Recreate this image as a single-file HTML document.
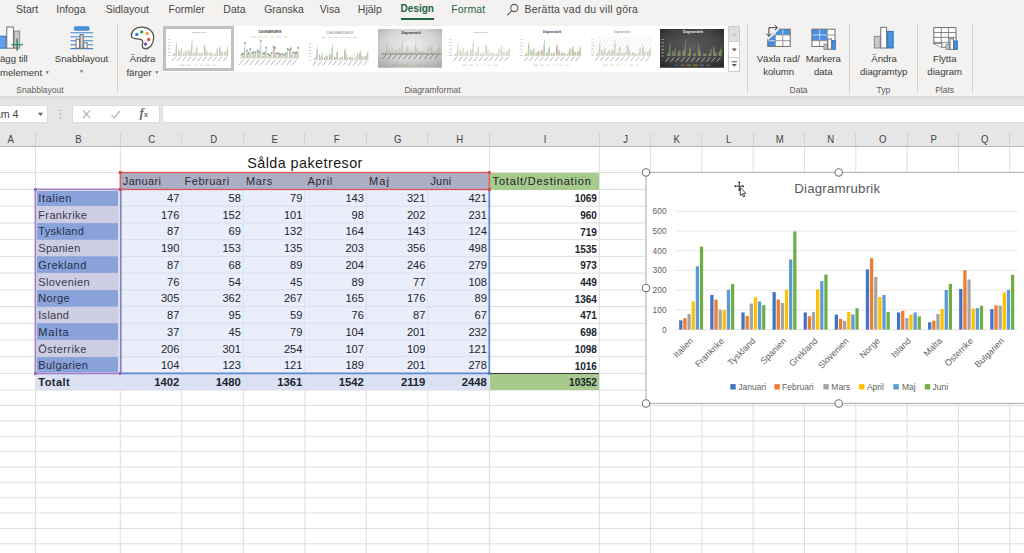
<!DOCTYPE html>
<html lang="sv"><head><meta charset="utf-8"><title>Sålda paketresor</title>
<style>
*{box-sizing:border-box;margin:0;padding:0}
html,body{width:1024px;height:553px;overflow:hidden;background:#fff}
body{font-family:"Liberation Sans",sans-serif;position:relative;color:#222}
.abs{position:absolute}
.t{position:absolute;white-space:nowrap;line-height:1}
#tabs{left:0;top:0;width:1024px;height:20px;background:#f3f2f1}
#tabs span{position:absolute;top:2.5px;font-size:10.5px;color:#484644;white-space:nowrap;line-height:12px}
#ribbon{left:0;top:20px;width:1024px;height:76.2px;background:#f3f2f1}
.rl{position:absolute;font-size:9.6px;color:#3b3a39;white-space:nowrap;line-height:12px;text-align:center;transform:translateX(-50%)}
.gl{position:absolute;font-size:8.5px;color:#605e5c;white-space:nowrap;line-height:10px;text-align:center;transform:translateX(-50%);top:85px}
.sep{position:absolute;top:24px;width:1px;height:69px;background:#d2d0ce}
#fbar{left:0;top:96.2px;width:1024px;height:50.8px;background:#e6e6e6}
.box{position:absolute;top:104.6px;height:18.7px;background:#fff;border:1px solid #dcdcdc}
.ch{position:absolute;top:132.3px;margin-left:.8px;height:15px;font-size:11.4px;color:#444;text-align:center;line-height:15px;transform:scaleX(.84)}
.chs{position:absolute;top:132.5px;width:1px;height:14px;background:#d3d3d3}
.cell{position:absolute;font-size:11px;white-space:nowrap;color:#20242e;overflow:visible}
.num{text-align:right;padding-right:2.4px;font-size:11.1px}
.txt{padding-left:2.6px}
.b{font-weight:bold}
.sm{font-size:10px}
</style></head><body>

<div id="tabs" class="abs">
<span style="left:16.1px">Start</span>
<span style="left:56.3px">Infoga</span>
<span style="left:105.7px">Sidlayout</span>
<span style="left:168.6px">Formler</span>
<span style="left:223.3px">Data</span>
<span style="left:264.2px">Granska</span>
<span style="left:319.8px">Visa</span>
<span style="left:357.8px">Hjälp</span>
<span style="left:400.6px;color:#1e6444;font-weight:bold;font-size:10px">Design</span>
<span style="left:451.2px;color:#21684a;letter-spacing:.15px">Format</span>
<div class="abs" style="left:400.6px;top:17.7px;width:33.6px;height:2.3px;background:#1e6444"></div>
<svg class="abs" style="left:505px;top:2px" width="16" height="16" viewBox="0 0 16 16"><circle cx="9.3" cy="6" r="3.6" fill="none" stroke="#605e5c" stroke-width="1.1"/><path d="M6.7 8.7L2.6 12.9" stroke="#605e5c" stroke-width="1.2" stroke-linecap="round"/></svg>
<span style="left:524.5px;letter-spacing:.26px">Berätta vad du vill göra</span>
</div>
<div id="ribbon" class="abs"></div>
<div class="rl" style="left:0;top:53px;transform:none;text-align:left">ägg till</div>
<div class="rl" style="left:0;top:65.5px;transform:none;text-align:left">melement <span style="font-size:5px;vertical-align:2.2px;color:#6a6a6a">&#9660;</span></div>
<div class="rl" style="left:81.5px;top:53px">Snabblayout</div>
<div class="rl" style="left:81.5px;top:65px"><span style="font-size:5px;vertical-align:2.2px;color:#6a6a6a">&#9660;</span></div>
<div class="gl" style="left:40px">Snabblayout</div>
<div class="sep" style="left:117px"></div>
<div class="rl" style="left:142.6px;top:53px">Ändra</div>
<div class="rl" style="left:142.8px;top:65.5px">färger <span style="font-size:5px;vertical-align:2.2px;color:#6a6a6a">&#9660;</span></div>
<div class="gl" style="left:432.5px">Diagramformat</div>
<div class="sep" style="left:747px"></div>
<div class="rl" style="left:778.3px;top:53px">Växla rad/</div>
<div class="rl" style="left:778.6px;top:65.5px">kolumn</div>
<div class="rl" style="left:823.3px;top:53px">Markera</div>
<div class="rl" style="left:823.3px;top:65.5px">data</div>
<div class="gl" style="left:798.6px">Data</div>
<div class="sep" style="left:849px"></div>
<div class="rl" style="left:884.1px;top:53px">Ändra</div>
<div class="rl" style="left:883.7px;top:65.5px">diagramtyp</div>
<div class="gl" style="left:883.3px">Typ</div>
<div class="sep" style="left:917px"></div>
<div class="rl" style="left:944.8px;top:53px">Flytta</div>
<div class="rl" style="left:944.7px;top:65.5px">diagram</div>
<div class="gl" style="left:944.6px">Plats</div>
<div class="sep" style="left:971.5px"></div>
<svg class="abs" style="left:0;top:0" width="1024" height="96" viewBox="0 0 1024 96"><rect x="-2.50" y="36.20" width="8.50" height="12.00" fill="#62a0e8" stroke="#2f74c6" stroke-width="1"/><rect x="14.10" y="31.00" width="5.50" height="17.20" fill="#c9c9c9" stroke="#8a8a8a" stroke-width="1"/><rect x="6.80" y="27.00" width="6.60" height="21.20" fill="#fff" stroke="#6e6e6e" stroke-width="1"/><path d="M17.1 38.6v12.2" stroke="#1e7a45" stroke-width="1.3"/><path d="M11.2 44.7h11.8" stroke="#2a8f86" stroke-width="1.3"/><rect x="74.4" y="26.7" width="14.6" height="3.6" rx=".8" fill="#4a90e2" stroke="#2f74c6" stroke-width=".7"/><path d="M70.5 32.8h22.6M70.5 36.7h22.6M70.5 40.7h22.6M70.5 44.7h22.6M70.5 48.6h22.6" stroke="#3f84d8" stroke-width="1.1"/><rect x="76.10" y="39.20" width="3.30" height="9.10" fill="#fff" stroke="#6e6e6e" stroke-width="1"/><rect x="83.80" y="42.70" width="3.30" height="5.60" fill="#fff" stroke="#6e6e6e" stroke-width="1"/><rect x="80.00" y="34.60" width="3.20" height="13.70" fill="#d2d2d2" stroke="#6e6e6e" stroke-width="1"/><path d="M141.7 27.2C148.2 27.2 153.7 31.2 153.7 37.6C153.7 44 149.6 48.8 145.6 48.8C142.5 48.8 141.7 46.5 142.5 44C143.3 41.5 142.6 39.7 139.6 39.2C136 38.6 131.3 39.6 131.3 35.6C131.3 30.6 136 27.2 141.7 27.2Z" fill="#fff" stroke="#505050" stroke-width="1.25"/><circle cx="136.8" cy="34.4" r="1.65" fill="#2f7be0"/><circle cx="141.7" cy="31.9" r="1.65" fill="#2c9a48"/><circle cx="147.1" cy="33.6" r="1.65" fill="#f39a2b"/><circle cx="148.7" cy="39.5" r="1.65" fill="#e24a2d"/><circle cx="145.5" cy="44.1" r="1.65" fill="#7c3fb5"/><rect x="767.8" y="29.2" width="22.4" height="17.2" fill="#fff"/><rect x="767.8" y="29.2" width="22.4" height="5.7" fill="#4a90e2"/><rect x="767.8" y="29.2" width="7.5" height="17.2" fill="#4a90e2"/><path d="M775.3 29.2V34.9M782.8 29.2V34.9M767.8 34.9H775.3M767.8 40.7H775.3" stroke="#cfe2f8" stroke-width=".9"/><path d="M775.3 34.9V46.4M782.8 34.9V46.4M775.3 34.9H790.2M775.3 40.7H790.2" stroke="#8c8c8c" stroke-width=".9"/><rect x="767.8" y="29.2" width="22.4" height="17.2" fill="none" stroke="#6e6e6e" stroke-width="1"/><path d="M766.5999999999999 28.0H778.9L766.5999999999999 39.699999999999996Z" fill="#f3f2f1"/><path d="M778.6999999999999 29.2L767.8 39.5" stroke="#fff" stroke-width="1.1"/><path d="M768.9 36.2V27.7H777" fill="none" stroke="#3d3d3d" stroke-width="1"/><path d="M774.6 25l2.8 2.7-2.8 2.7M766.3 33.6l2.6 2.8 2.6-2.8" fill="none" stroke="#3d3d3d" stroke-width="1"/><rect x="811.9" y="29.2" width="23.1" height="17.2" fill="#fff"/><rect x="811.9" y="29.2" width="15.4" height="11.5" fill="#4a90e2"/><path d="M819.6 29.2V40.7M811.9 34.9H827.3" stroke="#cfe2f8" stroke-width=".9"/><path d="M819.6 40.7V46.4M827.3 29.2V46.4M827.3 34.9H835.0M811.9 40.7H835.0" stroke="#8c8c8c" stroke-width=".9"/><rect x="811.9" y="29.2" width="23.1" height="17.2" fill="none" stroke="#6e6e6e" stroke-width="1"/><path d="M822.6 37.4H827.3M822.6 37.4V46.4" stroke="#6e6e6e" stroke-width="0"/><rect x="824.00" y="44.10" width="3.20" height="5.20" fill="#c9c9c9" stroke="#8a8a8a" stroke-width="1"/><rect x="832.10" y="40.60" width="3.20" height="8.70" fill="#4a90e2" stroke="#2f74c6" stroke-width="1"/><rect x="827.90" y="38.90" width="3.50" height="10.40" fill="#fff" stroke="#6e6e6e" stroke-width="1"/><rect x="874.30" y="36.30" width="5.90" height="11.70" fill="#c9c9c9" stroke="#8a8a8a" stroke-width="1"/><rect x="887.20" y="31.40" width="6.00" height="16.60" fill="#4a90e2" stroke="#2f74c6" stroke-width="1"/><rect x="880.80" y="27.30" width="5.80" height="20.70" fill="#fff" stroke="#6e6e6e" stroke-width="1"/><path d="M933.8 27.6H956.0V47.2H941.4L933.8 43.6Z" fill="#fff" stroke="#6e6e6e" stroke-width="1"/><path d="M941.2 27.6V47.2M948.6 27.6V47.2M933.8 32.5H956.0M933.8 37.4H956.0M933.8 42.3H956.0" stroke="#7c7c7c" stroke-width=".9"/><path d="M933.8 43.6H942.4L941.4 47.2" fill="#fff" stroke="#6e6e6e" stroke-width=".9"/><rect x="946.00" y="44.30" width="3.40" height="5.10" fill="#c9c9c9" stroke="#8a8a8a" stroke-width="1"/><rect x="954.10" y="41.00" width="3.30" height="8.40" fill="#4a90e2" stroke="#2f74c6" stroke-width="1"/><rect x="950.00" y="38.70" width="3.50" height="10.70" fill="#fff" stroke="#6e6e6e" stroke-width="1"/></svg>
<div class="abs" style="left:162.7px;top:25.5px;width:565.5px;height:46.8px;background:#fff"></div>
<div class="abs" style="left:162.9px;top:26.4px;width:70.8px;height:44.6px;border:3.1px solid #c1c1c1;background:#fff"></div>
<div class="abs" style="left:728.2px;top:25.5px;width:11.7px;height:46.8px;background:#fff;border:1px solid #cfcdcb"></div>
<div class="abs" style="left:728.2px;top:25.5px;width:11.7px;height:16.4px;background:#e0dedc;border:1px solid #cfcdcb"></div>
<div class="abs" style="left:728.2px;top:57.2px;width:11.7px;height:1px;background:#cfcdcb"></div>
<svg class="abs" style="left:727.7px;top:25.6px" width="13" height="48" viewBox="0 0 13 48">
<path d="M4.2 9.6L6.3 7.4 8.4 9.6z" fill="#bdbdbd"/>
<path d="M3.8 22.5h5L6.3 25.3z" fill="#555"/>
<path d="M3.6 35.8h5.4" stroke="#555" stroke-width="1"/><path d="M3.8 38h5L6.3 40.8z" fill="#555"/>
</svg>
<svg class="abs" style="left:166.0px;top:29.0px" width="64.6" height="38.8" viewBox="0 0 64.6 38.8"><text x="33.1" y="4.36" font-size="2.39" text-anchor="middle" fill="#8f8f8f" font-family="Liberation Sans, sans-serif">Diagramrubrik</text><path d="M7.11 26.40v-1.51h0.62v1.51zM12.23 26.40v-5.67h0.62v5.67zM17.35 26.40v-2.80h0.62v2.80zM22.47 26.40v-6.12h0.62v6.12zM27.59 26.40v-2.80h0.62v2.80zM32.71 26.40v-2.45h0.62v2.45zM37.82 26.40v-9.82h0.62v9.82zM42.94 26.40v-2.80h0.62v2.80zM48.06 26.40v-1.19h0.62v1.19zM53.18 26.40v-6.63h0.62v6.63zM58.30 26.40v-3.35h0.62v3.35z" fill="#4472c4" opacity="0.55"/><path d="M7.77 26.40v-1.87h0.62v1.87zM12.89 26.40v-4.89h0.62v4.89zM18.01 26.40v-2.22h0.62v2.22zM23.12 26.40v-4.93h0.62v4.93zM28.24 26.40v-2.19h0.62v2.19zM33.36 26.40v-1.74h0.62v1.74zM38.48 26.40v-11.66h0.62v11.66zM43.60 26.40v-3.06h0.62v3.06zM48.72 26.40v-1.45h0.62v1.45zM53.83 26.40v-9.69h0.62v9.69zM58.95 26.40v-3.96h0.62v3.96z" fill="#ed7d31" opacity="0.55"/><path d="M8.42 26.40v-2.54h0.62v2.54zM13.54 26.40v-3.25h0.62v3.25zM18.66 26.40v-4.25h0.62v4.25zM23.78 26.40v-4.35h0.62v4.35zM28.90 26.40v-2.87h0.62v2.87zM34.02 26.40v-1.45h0.62v1.45zM39.13 26.40v-8.60h0.62v8.60zM44.25 26.40v-1.90h0.62v1.90zM49.37 26.40v-2.54h0.62v2.54zM54.49 26.40v-8.18h0.62v8.18zM59.61 26.40v-3.90h0.62v3.90z" fill="#a5a5a5" opacity="0.55"/><path d="M9.08 26.40v-4.60h0.62v4.60zM14.20 26.40v-3.16h0.62v3.16zM19.32 26.40v-5.28h0.62v5.28zM24.43 26.40v-6.54h0.62v6.54zM29.55 26.40v-6.57h0.62v6.57zM34.67 26.40v-2.87h0.62v2.87zM39.79 26.40v-5.31h0.62v5.31zM44.91 26.40v-2.45h0.62v2.45zM50.03 26.40v-3.35h0.62v3.35zM55.14 26.40v-3.45h0.62v3.45zM60.26 26.40v-6.09h0.62v6.09z" fill="#ffc000" opacity="0.55"/><path d="M9.74 26.40v-10.34h0.62v10.34zM14.85 26.40v-6.50h0.62v6.50zM19.97 26.40v-4.60h0.62v4.60zM25.09 26.40v-11.46h0.62v11.46zM30.21 26.40v-7.92h0.62v7.92zM35.33 26.40v-2.48h0.62v2.48zM40.44 26.40v-5.67h0.62v5.67zM45.56 26.40v-2.80h0.62v2.80zM50.68 26.40v-6.47h0.62v6.47zM55.80 26.40v-3.51h0.62v3.51zM60.92 26.40v-6.47h0.62v6.47z" fill="#5b9bd5" opacity="0.55"/><path d="M10.39 26.40v-13.56h0.62v13.56zM15.51 26.40v-7.44h0.62v7.44zM20.63 26.40v-3.99h0.62v3.99zM25.75 26.40v-16.04h0.62v16.04zM30.86 26.40v-8.98h0.62v8.98zM35.98 26.40v-3.48h0.62v3.48zM41.10 26.40v-2.87h0.62v2.87zM46.22 26.40v-2.16h0.62v2.16zM51.34 26.40v-7.47h0.62v7.47zM56.45 26.40v-3.90h0.62v3.90zM61.57 26.40v-8.95h0.62v8.95z" fill="#70ad47" opacity="0.55"/><path d="M6.0 26.6H63.3" stroke="#cfcfcf" stroke-width=".5"/><path d="M1.9 26.0h2.6v.9h-2.6zM1.9 22.8h2.6v.9h-2.6zM1.9 19.6h2.6v.9h-2.6zM1.9 16.3h2.6v.9h-2.6zM1.9 13.1h2.6v.9h-2.6zM1.9 9.9h2.6v.9h-2.6z" fill="#9c9c9c" opacity=".5"/><path d="M9.7 27.8l-3.7 4.3M14.8 27.8l-3.7 4.3M19.9 27.8l-3.7 4.3M25.0 27.8l-3.7 4.3M30.1 27.8l-3.7 4.3M35.3 27.8l-3.7 4.3M40.4 27.8l-3.7 4.3M45.5 27.8l-3.7 4.3M50.6 27.8l-3.7 4.3M55.7 27.8l-3.7 4.3M60.9 27.8l-3.7 4.3" stroke="#8e8e8e" stroke-width=".9" opacity=".75" fill="none"/><rect x="14.3" y="35.7" width="4.4" height=".8" fill="#4472c4" opacity="0.42"/><rect x="20.6" y="35.7" width="4.4" height=".8" fill="#ed7d31" opacity="0.42"/><rect x="26.9" y="35.7" width="4.4" height=".8" fill="#a5a5a5" opacity="0.42"/><rect x="33.2" y="35.7" width="4.4" height=".8" fill="#ffc000" opacity="0.42"/><rect x="39.5" y="35.7" width="4.4" height=".8" fill="#5b9bd5" opacity="0.42"/><rect x="45.8" y="35.7" width="4.4" height=".8" fill="#70ad47" opacity="0.42"/></svg>
<svg class="abs" style="left:236.5px;top:29.0px" width="64.6" height="38.8" viewBox="0 0 64.6 38.8"><text x="33.1" y="4.26" font-size="2.67" text-anchor="middle" fill="#3c3c3c" font-weight="bold" font-family="Liberation Sans, sans-serif">DIAGRAMRUBRIK</text><path d="M4.14 28.90v-1.46h0.65v1.46zM9.47 28.90v-5.46h0.65v5.46zM14.79 28.90v-2.70h0.65v2.70zM20.12 28.90v-5.89h0.65v5.89zM25.45 28.90v-2.70h0.65v2.70zM30.78 28.90v-2.36h0.65v2.36zM36.10 28.90v-9.46h0.65v9.46zM41.43 28.90v-2.70h0.65v2.70zM46.76 28.90v-1.15h0.65v1.15zM52.08 28.90v-6.39h0.65v6.39zM57.41 28.90v-3.22h0.65v3.22z" fill="#4472c4" opacity="0.62"/><path d="M4.82 28.90v-1.80h0.65v1.80zM10.15 28.90v-4.71h0.65v4.71zM15.48 28.90v-2.14h0.65v2.14zM20.80 28.90v-4.74h0.65v4.74zM26.13 28.90v-2.11h0.65v2.11zM31.46 28.90v-1.67h0.65v1.67zM36.79 28.90v-11.22h0.65v11.22zM42.11 28.90v-2.94h0.65v2.94zM47.44 28.90v-1.40h0.65v1.40zM52.77 28.90v-9.33h0.65v9.33zM58.09 28.90v-3.81h0.65v3.81z" fill="#ed7d31" opacity="0.62"/><path d="M5.50 28.90v-2.45h0.65v2.45zM10.83 28.90v-3.13h0.65v3.13zM16.16 28.90v-4.09h0.65v4.09zM21.49 28.90v-4.19h0.65v4.19zM26.81 28.90v-2.76h0.65v2.76zM32.14 28.90v-1.40h0.65v1.40zM37.47 28.90v-8.28h0.65v8.28zM42.79 28.90v-1.83h0.65v1.83zM48.12 28.90v-2.45h0.65v2.45zM53.45 28.90v-7.87h0.65v7.87zM58.78 28.90v-3.75h0.65v3.75z" fill="#a5a5a5" opacity="0.62"/><path d="M6.19 28.90v-4.43h0.65v4.43zM11.51 28.90v-3.04h0.65v3.04zM16.84 28.90v-5.08h0.65v5.08zM22.17 28.90v-6.29h0.65v6.29zM27.49 28.90v-6.32h0.65v6.32zM32.82 28.90v-2.76h0.65v2.76zM38.15 28.90v-5.12h0.65v5.12zM43.48 28.90v-2.36h0.65v2.36zM48.80 28.90v-3.22h0.65v3.22zM54.13 28.90v-3.32h0.65v3.32zM59.46 28.90v-5.86h0.65v5.86z" fill="#ffc000" opacity="0.62"/><path d="M6.87 28.90v-9.95h0.65v9.95zM12.20 28.90v-6.26h0.65v6.26zM17.52 28.90v-4.43h0.65v4.43zM22.85 28.90v-11.04h0.65v11.04zM28.18 28.90v-7.63h0.65v7.63zM33.50 28.90v-2.39h0.65v2.39zM38.83 28.90v-5.46h0.65v5.46zM44.16 28.90v-2.70h0.65v2.70zM49.49 28.90v-6.23h0.65v6.23zM54.81 28.90v-3.38h0.65v3.38zM60.14 28.90v-6.23h0.65v6.23z" fill="#5b9bd5" opacity="0.62"/><path d="M7.55 28.90v-13.05h0.65v13.05zM12.88 28.90v-7.16h0.65v7.16zM18.20 28.90v-3.84h0.65v3.84zM23.53 28.90v-15.44h0.65v15.44zM28.86 28.90v-8.65h0.65v8.65zM34.19 28.90v-3.35h0.65v3.35zM39.51 28.90v-2.76h0.65v2.76zM44.84 28.90v-2.08h0.65v2.08zM50.17 28.90v-7.19h0.65v7.19zM55.50 28.90v-3.75h0.65v3.75zM60.82 28.90v-8.62h0.65v8.62z" fill="#70ad47" opacity="0.62"/><path d="M3.84 24.84h1.5v2h-1.5zM5.20 23.85h1.5v2h-1.5zM7.25 13.25h1.5v2h-1.5zM9.17 20.84h1.5v2h-1.5zM10.53 23.17h1.5v2h-1.5zM12.58 19.14h1.5v2h-1.5zM14.49 23.60h1.5v2h-1.5zM15.86 22.21h1.5v2h-1.5zM17.90 22.46h1.5v2h-1.5zM19.82 20.41h1.5v2h-1.5zM21.19 22.11h1.5v2h-1.5zM23.23 10.86h1.5v2h-1.5zM25.15 23.60h1.5v2h-1.5zM26.51 23.54h1.5v2h-1.5zM28.56 17.65h1.5v2h-1.5zM30.48 23.94h1.5v2h-1.5zM31.84 24.90h1.5v2h-1.5zM33.89 22.95h1.5v2h-1.5zM35.80 16.84h1.5v2h-1.5zM37.17 18.02h1.5v2h-1.5zM39.21 23.54h1.5v2h-1.5zM41.13 23.60h1.5v2h-1.5zM42.49 24.47h1.5v2h-1.5zM44.54 24.22h1.5v2h-1.5zM46.46 25.15h1.5v2h-1.5zM47.82 23.85h1.5v2h-1.5zM49.87 19.11h1.5v2h-1.5zM51.78 19.91h1.5v2h-1.5zM53.15 18.43h1.5v2h-1.5zM55.20 22.55h1.5v2h-1.5zM57.11 23.08h1.5v2h-1.5zM58.48 22.55h1.5v2h-1.5zM60.52 17.68h1.5v2h-1.5z" fill="#555" opacity=".6"/><path d="M3.0 29.1H62.6" stroke="#cfcfcf" stroke-width=".5"/><path d="M6.8 30.3l-5.0 5.8M12.1 30.3l-5.0 5.8M17.5 30.3l-5.0 5.8M22.8 30.3l-5.0 5.8M28.1 30.3l-5.0 5.8M33.4 30.3l-5.0 5.8M38.8 30.3l-5.0 5.8M44.1 30.3l-5.0 5.8M49.4 30.3l-5.0 5.8M54.7 30.3l-5.0 5.8M60.1 30.3l-5.0 5.8" stroke="#8e8e8e" stroke-width=".9" opacity=".75" fill="none"/><rect x="14.3" y="7.5" width="4.4" height=".8" fill="#4472c4" opacity="0.42"/><rect x="20.6" y="7.5" width="4.4" height=".8" fill="#ed7d31" opacity="0.42"/><rect x="26.9" y="7.5" width="4.4" height=".8" fill="#a5a5a5" opacity="0.42"/><rect x="33.2" y="7.5" width="4.4" height=".8" fill="#ffc000" opacity="0.42"/><rect x="39.5" y="7.5" width="4.4" height=".8" fill="#5b9bd5" opacity="0.42"/><rect x="45.8" y="7.5" width="4.4" height=".8" fill="#70ad47" opacity="0.42"/></svg>
<svg class="abs" style="left:307.0px;top:29.0px" width="64.6" height="38.8" viewBox="0 0 64.6 38.8"><text x="33.1" y="5.15" font-size="3.20" text-anchor="middle" fill="#8a8a8a" font-family="Liberation Sans, sans-serif">DIAGRAMRUBRIK</text><path d="M6.91 30.80v-1.49h0.62v1.49zM11.95 30.80v-5.56h0.62v5.56zM17.00 30.80v-2.75h0.62v2.75zM22.04 30.80v-6.00h0.62v6.00zM27.09 30.80v-2.75h0.62v2.75zM32.13 30.80v-2.40h0.62v2.40zM37.18 30.80v-9.64h0.62v9.64zM42.22 30.80v-2.75h0.62v2.75zM47.27 30.80v-1.17h0.62v1.17zM52.31 30.80v-6.51h0.62v6.51zM57.36 30.80v-3.29h0.62v3.29z" fill="#4472c4" opacity="0.65"/><path d="M7.55 30.80v-1.83h0.62v1.83zM12.60 30.80v-4.80h0.62v4.80zM17.64 30.80v-2.18h0.62v2.18zM22.69 30.80v-4.83h0.62v4.83zM27.73 30.80v-2.15h0.62v2.15zM32.78 30.80v-1.71h0.62v1.71zM37.82 30.80v-11.44h0.62v11.44zM42.87 30.80v-3.00h0.62v3.00zM47.92 30.80v-1.42h0.62v1.42zM52.96 30.80v-9.51h0.62v9.51zM58.01 30.80v-3.89h0.62v3.89z" fill="#ed7d31" opacity="0.65"/><path d="M8.20 30.80v-2.50h0.62v2.50zM13.24 30.80v-3.19h0.62v3.19zM18.29 30.80v-4.17h0.62v4.17zM23.33 30.80v-4.27h0.62v4.27zM28.38 30.80v-2.81h0.62v2.81zM33.42 30.80v-1.42h0.62v1.42zM38.47 30.80v-8.44h0.62v8.44zM43.52 30.80v-1.86h0.62v1.86zM48.56 30.80v-2.50h0.62v2.50zM53.61 30.80v-8.03h0.62v8.03zM58.65 30.80v-3.82h0.62v3.82z" fill="#a5a5a5" opacity="0.65"/><path d="M8.84 30.80v-4.52h0.62v4.52zM13.89 30.80v-3.10h0.62v3.10zM18.93 30.80v-5.18h0.62v5.18zM23.98 30.80v-6.41h0.62v6.41zM29.03 30.80v-6.45h0.62v6.45zM34.07 30.80v-2.81h0.62v2.81zM39.12 30.80v-5.21h0.62v5.21zM44.16 30.80v-2.40h0.62v2.40zM49.21 30.80v-3.29h0.62v3.29zM54.25 30.80v-3.38h0.62v3.38zM59.30 30.80v-5.97h0.62v5.97z" fill="#ffc000" opacity="0.65"/><path d="M9.49 30.80v-10.14h0.62v10.14zM14.54 30.80v-6.38h0.62v6.38zM19.58 30.80v-4.52h0.62v4.52zM24.63 30.80v-11.25h0.62v11.25zM29.67 30.80v-7.77h0.62v7.77zM34.72 30.80v-2.43h0.62v2.43zM39.76 30.80v-5.56h0.62v5.56zM44.81 30.80v-2.75h0.62v2.75zM49.85 30.80v-6.35h0.62v6.35zM54.90 30.80v-3.44h0.62v3.44zM59.94 30.80v-6.35h0.62v6.35z" fill="#5b9bd5" opacity="0.65"/><path d="M10.14 30.80v-13.30h0.62v13.30zM15.18 30.80v-7.30h0.62v7.30zM20.23 30.80v-3.92h0.62v3.92zM25.27 30.80v-15.74h0.62v15.74zM30.32 30.80v-8.82h0.62v8.82zM35.36 30.80v-3.41h0.62v3.41zM40.41 30.80v-2.81h0.62v2.81zM45.45 30.80v-2.12h0.62v2.12zM50.50 30.80v-7.33h0.62v7.33zM55.54 30.80v-3.82h0.62v3.82zM60.59 30.80v-8.78h0.62v8.78z" fill="#70ad47" opacity="0.65"/><path d="M5.8 31.0H62.3" stroke="#cfcfcf" stroke-width=".5"/><path d="M1.7 30.4h2.6v.9h-2.6zM1.7 27.2h2.6v.9h-2.6zM1.7 24.1h2.6v.9h-2.6zM1.7 20.9h2.6v.9h-2.6zM1.7 17.8h2.6v.9h-2.6zM1.7 14.6h2.6v.9h-2.6z" fill="#9c9c9c" opacity=".5"/><path d="M9.4 32.2l-3.7 4.3M14.5 32.2l-3.7 4.3M19.5 32.2l-3.7 4.3M24.6 32.2l-3.7 4.3M29.6 32.2l-3.7 4.3M34.7 32.2l-3.7 4.3M39.7 32.2l-3.7 4.3M44.7 32.2l-3.7 4.3M49.8 32.2l-3.7 4.3M54.8 32.2l-3.7 4.3M59.9 32.2l-3.7 4.3" stroke="#8e8e8e" stroke-width=".9" opacity=".75" fill="none"/><rect x="14.3" y="8.2" width="4.4" height=".8" fill="#4472c4" opacity="0.42"/><rect x="20.6" y="8.2" width="4.4" height=".8" fill="#ed7d31" opacity="0.42"/><rect x="26.9" y="8.2" width="4.4" height=".8" fill="#a5a5a5" opacity="0.42"/><rect x="33.2" y="8.2" width="4.4" height=".8" fill="#ffc000" opacity="0.42"/><rect x="39.5" y="8.2" width="4.4" height=".8" fill="#5b9bd5" opacity="0.42"/><rect x="45.8" y="8.2" width="4.4" height=".8" fill="#70ad47" opacity="0.42"/></svg>
<svg class="abs" style="left:377.5px;top:29.0px" width="64.6" height="38.8" viewBox="0 0 64.6 38.8"><defs><radialGradient id="gg" cx="50%" cy="40%" r="70%"><stop offset="0" stop-color="#ededed"/><stop offset=".55" stop-color="#d6d6d6"/><stop offset="1" stop-color="#adadad"/></radialGradient></defs><rect width="64.6" height="38.8" fill="url(#gg)"/><text x="33.1" y="5.02" font-size="2.84" text-anchor="middle" fill="#2e2e2e" font-weight="bold" font-family="Liberation Sans, sans-serif">Diagramrubrik</text><rect x="3.8" y="24.2" width="59.5" height="1.7" fill="#8f8f8f" opacity=".75"/><path d="M5.43 24.50v-1.32h0.64v1.32zM10.65 24.50v-4.93h0.64v4.93zM15.88 24.50v-2.44h0.64v2.44zM21.11 24.50v-5.32h0.64v5.32zM26.34 24.50v-2.44h0.64v2.44zM31.56 24.50v-2.13h0.64v2.13zM36.79 24.50v-8.54h0.64v8.54zM42.02 24.50v-2.44h0.64v2.44zM47.25 24.50v-1.04h0.64v1.04zM52.47 24.50v-5.77h0.64v5.77zM57.70 24.50v-2.91h0.64v2.91z" fill="#4472c4" opacity="0.35"/><path d="M6.10 24.50v-1.62h0.64v1.62zM11.32 24.50v-4.26h0.64v4.26zM16.55 24.50v-1.93h0.64v1.93zM21.78 24.50v-4.28h0.64v4.28zM27.01 24.50v-1.90h0.64v1.90zM32.23 24.50v-1.51h0.64v1.51zM37.46 24.50v-10.14h0.64v10.14zM42.69 24.50v-2.66h0.64v2.66zM47.91 24.50v-1.26h0.64v1.26zM53.14 24.50v-8.43h0.64v8.43zM58.37 24.50v-3.44h0.64v3.44z" fill="#ed7d31" opacity="0.35"/><path d="M6.77 24.50v-2.21h0.64v2.21zM11.99 24.50v-2.83h0.64v2.83zM17.22 24.50v-3.70h0.64v3.70zM22.45 24.50v-3.78h0.64v3.78zM27.68 24.50v-2.49h0.64v2.49zM32.90 24.50v-1.26h0.64v1.26zM38.13 24.50v-7.48h0.64v7.48zM43.36 24.50v-1.65h0.64v1.65zM48.58 24.50v-2.21h0.64v2.21zM53.81 24.50v-7.11h0.64v7.11zM59.04 24.50v-3.39h0.64v3.39z" fill="#a5a5a5" opacity="0.35"/><path d="M7.44 24.50v-4.00h0.64v4.00zM12.66 24.50v-2.74h0.64v2.74zM17.89 24.50v-4.59h0.64v4.59zM23.12 24.50v-5.68h0.64v5.68zM28.34 24.50v-5.71h0.64v5.71zM33.57 24.50v-2.49h0.64v2.49zM38.80 24.50v-4.62h0.64v4.62zM44.03 24.50v-2.13h0.64v2.13zM49.25 24.50v-2.91h0.64v2.91zM54.48 24.50v-3.00h0.64v3.00zM59.71 24.50v-5.29h0.64v5.29z" fill="#ffc000" opacity="0.35"/><path d="M8.10 24.50v-8.99h0.64v8.99zM13.33 24.50v-5.66h0.64v5.66zM18.56 24.50v-4.00h0.64v4.00zM23.79 24.50v-9.97h0.64v9.97zM29.01 24.50v-6.89h0.64v6.89zM34.24 24.50v-2.16h0.64v2.16zM39.47 24.50v-4.93h0.64v4.93zM44.70 24.50v-2.44h0.64v2.44zM49.92 24.50v-5.63h0.64v5.63zM55.15 24.50v-3.05h0.64v3.05zM60.38 24.50v-5.63h0.64v5.63z" fill="#5b9bd5" opacity="0.35"/><path d="M8.77 24.50v-11.79h0.64v11.79zM14.00 24.50v-6.47h0.64v6.47zM19.23 24.50v-3.47h0.64v3.47zM24.46 24.50v-13.94h0.64v13.94zM29.68 24.50v-7.81h0.64v7.81zM34.91 24.50v-3.02h0.64v3.02zM40.14 24.50v-2.49h0.64v2.49zM45.36 24.50v-1.88h0.64v1.88zM50.59 24.50v-6.50h0.64v6.50zM55.82 24.50v-3.39h0.64v3.39zM61.05 24.50v-7.78h0.64v7.78z" fill="#70ad47" opacity="0.35"/><path d="M8.0 25.9l-3.7 4.3M13.3 25.9l-3.7 4.3M18.5 25.9l-3.7 4.3M23.7 25.9l-3.7 4.3M29.0 25.9l-3.7 4.3M34.2 25.9l-3.7 4.3M39.4 25.9l-3.7 4.3M44.6 25.9l-3.7 4.3M49.9 25.9l-3.7 4.3M55.1 25.9l-3.7 4.3M60.3 25.9l-3.7 4.3" stroke="#5e5e5e" stroke-width=".9" opacity=".75" fill="none"/><rect x="14.3" y="35.7" width="4.4" height=".8" fill="#4472c4" opacity="0.42"/><rect x="20.6" y="35.7" width="4.4" height=".8" fill="#ed7d31" opacity="0.42"/><rect x="26.9" y="35.7" width="4.4" height=".8" fill="#a5a5a5" opacity="0.42"/><rect x="33.2" y="35.7" width="4.4" height=".8" fill="#ffc000" opacity="0.42"/><rect x="39.5" y="35.7" width="4.4" height=".8" fill="#5b9bd5" opacity="0.42"/><rect x="45.8" y="35.7" width="4.4" height=".8" fill="#70ad47" opacity="0.42"/></svg>
<svg class="abs" style="left:448.0px;top:29.0px" width="64.6" height="38.8" viewBox="0 0 64.6 38.8"><text x="33.1" y="4.36" font-size="2.39" text-anchor="middle" fill="#8f8f8f" font-family="Liberation Sans, sans-serif">Diagramrubrik</text><path d="M6.52 26.40v-1.51h0.63v1.51zM11.64 26.40v-5.67h0.63v5.67zM16.77 26.40v-2.80h0.63v2.80zM21.90 26.40v-6.12h0.63v6.12zM27.02 26.40v-2.80h0.63v2.80zM32.15 26.40v-2.45h0.63v2.45zM37.28 26.40v-9.82h0.63v9.82zM42.41 26.40v-2.80h0.63v2.80zM47.53 26.40v-1.19h0.63v1.19zM52.66 26.40v-6.63h0.63v6.63zM57.79 26.40v-3.35h0.63v3.35z" fill="#4472c4" opacity="0.42"/><path d="M7.17 26.40v-1.87h0.63v1.87zM12.30 26.40v-4.89h0.63v4.89zM17.43 26.40v-2.22h0.63v2.22zM22.55 26.40v-4.93h0.63v4.93zM27.68 26.40v-2.19h0.63v2.19zM32.81 26.40v-1.74h0.63v1.74zM37.94 26.40v-11.66h0.63v11.66zM43.06 26.40v-3.06h0.63v3.06zM48.19 26.40v-1.45h0.63v1.45zM53.32 26.40v-9.69h0.63v9.69zM58.44 26.40v-3.96h0.63v3.96z" fill="#ed7d31" opacity="0.42"/><path d="M7.83 26.40v-2.54h0.63v2.54zM12.96 26.40v-3.25h0.63v3.25zM18.08 26.40v-4.25h0.63v4.25zM23.21 26.40v-4.35h0.63v4.35zM28.34 26.40v-2.87h0.63v2.87zM33.46 26.40v-1.45h0.63v1.45zM38.59 26.40v-8.60h0.63v8.60zM43.72 26.40v-1.90h0.63v1.90zM48.85 26.40v-2.54h0.63v2.54zM53.97 26.40v-8.18h0.63v8.18zM59.10 26.40v-3.90h0.63v3.90z" fill="#a5a5a5" opacity="0.42"/><path d="M8.48 26.40v-4.60h0.63v4.60zM13.61 26.40v-3.16h0.63v3.16zM18.74 26.40v-5.28h0.63v5.28zM23.87 26.40v-6.54h0.63v6.54zM28.99 26.40v-6.57h0.63v6.57zM34.12 26.40v-2.87h0.63v2.87zM39.25 26.40v-5.31h0.63v5.31zM44.38 26.40v-2.45h0.63v2.45zM49.50 26.40v-3.35h0.63v3.35zM54.63 26.40v-3.45h0.63v3.45zM59.76 26.40v-6.09h0.63v6.09z" fill="#ffc000" opacity="0.42"/><path d="M9.14 26.40v-10.34h0.63v10.34zM14.27 26.40v-6.50h0.63v6.50zM19.40 26.40v-4.60h0.63v4.60zM24.52 26.40v-11.46h0.63v11.46zM29.65 26.40v-7.92h0.63v7.92zM34.78 26.40v-2.48h0.63v2.48zM39.91 26.40v-5.67h0.63v5.67zM45.03 26.40v-2.80h0.63v2.80zM50.16 26.40v-6.47h0.63v6.47zM55.29 26.40v-3.51h0.63v3.51zM60.41 26.40v-6.47h0.63v6.47z" fill="#5b9bd5" opacity="0.42"/><path d="M9.80 26.40v-13.56h0.63v13.56zM14.93 26.40v-7.44h0.63v7.44zM20.05 26.40v-3.99h0.63v3.99zM25.18 26.40v-16.04h0.63v16.04zM30.31 26.40v-8.98h0.63v8.98zM35.43 26.40v-3.48h0.63v3.48zM40.56 26.40v-2.87h0.63v2.87zM45.69 26.40v-2.16h0.63v2.16zM50.82 26.40v-7.47h0.63v7.47zM55.94 26.40v-3.90h0.63v3.90zM61.07 26.40v-8.95h0.63v8.95z" fill="#70ad47" opacity="0.42"/><path d="M5.4 26.6H62.8" stroke="#cfcfcf" stroke-width=".5"/><path d="M1.3 26.0h2.6v.9h-2.6zM1.3 22.8h2.6v.9h-2.6zM1.3 19.6h2.6v.9h-2.6zM1.3 16.3h2.6v.9h-2.6zM1.3 13.1h2.6v.9h-2.6zM1.3 9.9h2.6v.9h-2.6z" fill="#9c9c9c" opacity=".5"/><path d="M9.1 27.8l-3.7 4.3M14.2 27.8l-3.7 4.3M19.3 27.8l-3.7 4.3M24.5 27.8l-3.7 4.3M29.6 27.8l-3.7 4.3M34.7 27.8l-3.7 4.3M39.8 27.8l-3.7 4.3M45.0 27.8l-3.7 4.3M50.1 27.8l-3.7 4.3M55.2 27.8l-3.7 4.3M60.4 27.8l-3.7 4.3" stroke="#8e8e8e" stroke-width=".9" opacity=".75" fill="none"/><rect x="14.3" y="35.7" width="4.4" height=".8" fill="#4472c4" opacity="0.42"/><rect x="20.6" y="35.7" width="4.4" height=".8" fill="#ed7d31" opacity="0.42"/><rect x="26.9" y="35.7" width="4.4" height=".8" fill="#a5a5a5" opacity="0.42"/><rect x="33.2" y="35.7" width="4.4" height=".8" fill="#ffc000" opacity="0.42"/><rect x="39.5" y="35.7" width="4.4" height=".8" fill="#5b9bd5" opacity="0.42"/><rect x="45.8" y="35.7" width="4.4" height=".8" fill="#70ad47" opacity="0.42"/></svg>
<svg class="abs" style="left:518.5px;top:29.0px" width="64.6" height="38.8" viewBox="0 0 64.6 38.8"><text x="33.1" y="4.27" font-size="2.69" text-anchor="middle" fill="#2c3350" font-weight="bold" font-family="Liberation Sans, sans-serif">Diagramrubrik</text><path d="M6.32 26.40v-1.49h0.63v1.49zM11.47 26.40v-5.56h0.63v5.56zM16.63 26.40v-2.75h0.63v2.75zM21.78 26.40v-6.00h0.63v6.00zM26.94 26.40v-2.75h0.63v2.75zM32.09 26.40v-2.40h0.63v2.40zM37.25 26.40v-9.64h0.63v9.64zM42.40 26.40v-2.75h0.63v2.75zM47.55 26.40v-1.17h0.63v1.17zM52.71 26.40v-6.51h0.63v6.51zM57.86 26.40v-3.29h0.63v3.29z" fill="#4472c4" opacity="0.7"/><path d="M6.98 26.40v-1.83h0.63v1.83zM12.13 26.40v-4.80h0.63v4.80zM17.29 26.40v-2.18h0.63v2.18zM22.44 26.40v-4.83h0.63v4.83zM27.60 26.40v-2.15h0.63v2.15zM32.75 26.40v-1.71h0.63v1.71zM37.91 26.40v-11.44h0.63v11.44zM43.06 26.40v-3.00h0.63v3.00zM48.21 26.40v-1.42h0.63v1.42zM53.37 26.40v-9.51h0.63v9.51zM58.52 26.40v-3.89h0.63v3.89z" fill="#ed7d31" opacity="0.7"/><path d="M7.64 26.40v-2.50h0.63v2.50zM12.79 26.40v-3.19h0.63v3.19zM17.95 26.40v-4.17h0.63v4.17zM23.10 26.40v-4.27h0.63v4.27zM28.26 26.40v-2.81h0.63v2.81zM33.41 26.40v-1.42h0.63v1.42zM38.57 26.40v-8.44h0.63v8.44zM43.72 26.40v-1.86h0.63v1.86zM48.87 26.40v-2.50h0.63v2.50zM54.03 26.40v-8.03h0.63v8.03zM59.18 26.40v-3.82h0.63v3.82z" fill="#a5a5a5" opacity="0.7"/><path d="M8.30 26.40v-4.52h0.63v4.52zM13.45 26.40v-3.10h0.63v3.10zM18.61 26.40v-5.18h0.63v5.18zM23.76 26.40v-6.41h0.63v6.41zM28.92 26.40v-6.45h0.63v6.45zM34.07 26.40v-2.81h0.63v2.81zM39.23 26.40v-5.21h0.63v5.21zM44.38 26.40v-2.40h0.63v2.40zM49.54 26.40v-3.29h0.63v3.29zM54.69 26.40v-3.38h0.63v3.38zM59.84 26.40v-5.97h0.63v5.97z" fill="#ffc000" opacity="0.7"/><path d="M8.96 26.40v-10.14h0.63v10.14zM14.11 26.40v-6.38h0.63v6.38zM19.27 26.40v-4.52h0.63v4.52zM24.42 26.40v-11.25h0.63v11.25zM29.58 26.40v-7.77h0.63v7.77zM34.73 26.40v-2.43h0.63v2.43zM39.89 26.40v-5.56h0.63v5.56zM45.04 26.40v-2.75h0.63v2.75zM50.20 26.40v-6.35h0.63v6.35zM55.35 26.40v-3.44h0.63v3.44zM60.50 26.40v-6.35h0.63v6.35z" fill="#5b9bd5" opacity="0.7"/><path d="M9.62 26.40v-13.30h0.63v13.30zM14.77 26.40v-7.30h0.63v7.30zM19.93 26.40v-3.92h0.63v3.92zM25.08 26.40v-15.74h0.63v15.74zM30.24 26.40v-8.82h0.63v8.82zM35.39 26.40v-3.41h0.63v3.41zM40.55 26.40v-2.81h0.63v2.81zM45.70 26.40v-2.12h0.63v2.12zM50.86 26.40v-7.33h0.63v7.33zM56.01 26.40v-3.82h0.63v3.82zM61.16 26.40v-8.78h0.63v8.78z" fill="#70ad47" opacity="0.7"/><path d="M5.2 26.6H62.9" stroke="#cfcfcf" stroke-width=".5"/><path d="M1.1 26.0h2.6v.9h-2.6zM1.1 22.8h2.6v.9h-2.6zM1.1 19.7h2.6v.9h-2.6zM1.1 16.5h2.6v.9h-2.6zM1.1 13.4h2.6v.9h-2.6zM1.1 10.2h2.6v.9h-2.6z" fill="#9c9c9c" opacity=".5"/><path d="M8.9 27.8l-3.7 4.3M14.1 27.8l-3.7 4.3M19.2 27.8l-3.7 4.3M24.4 27.8l-3.7 4.3M29.5 27.8l-3.7 4.3M34.7 27.8l-3.7 4.3M39.8 27.8l-3.7 4.3M45.0 27.8l-3.7 4.3M50.1 27.8l-3.7 4.3M55.3 27.8l-3.7 4.3M60.4 27.8l-3.7 4.3" stroke="#8e8e8e" stroke-width=".9" opacity=".75" fill="none"/><rect x="14.3" y="35.7" width="4.4" height=".8" fill="#4472c4" opacity="0.42"/><rect x="20.6" y="35.7" width="4.4" height=".8" fill="#ed7d31" opacity="0.42"/><rect x="26.9" y="35.7" width="4.4" height=".8" fill="#a5a5a5" opacity="0.42"/><rect x="33.2" y="35.7" width="4.4" height=".8" fill="#ffc000" opacity="0.42"/><rect x="39.5" y="35.7" width="4.4" height=".8" fill="#5b9bd5" opacity="0.42"/><rect x="45.8" y="35.7" width="4.4" height=".8" fill="#70ad47" opacity="0.42"/></svg>
<svg class="abs" style="left:589.0px;top:29.0px" width="64.6" height="38.8" viewBox="0 0 64.6 38.8"><text x="33.1" y="4.25" font-size="2.64" text-anchor="middle" fill="#7d7d7d" font-family="Liberation Sans, sans-serif">Diagramrubrik</text><path d="M-0.4 26.2l11 -18.6M3.2 26.2l11 -18.6M6.8 26.2l11 -18.6M10.4 26.2l11 -18.6M14.0 26.2l11 -18.6M17.6 26.2l11 -18.6M21.2 26.2l11 -18.6M24.8 26.2l11 -18.6M28.4 26.2l11 -18.6M32.0 26.2l11 -18.6M35.6 26.2l11 -18.6M39.2 26.2l11 -18.6M42.8 26.2l11 -18.6M46.4 26.2l11 -18.6M50.0 26.2l11 -18.6M53.6 26.2l11 -18.6" stroke="#d4d4d4" stroke-width=".45" fill="none" clip-path="inset(0)"/><path d="M7.41 26.20v-1.47h0.62v1.47zM12.46 26.20v-5.49h0.62v5.49zM17.52 26.20v-2.71h0.62v2.71zM22.57 26.20v-5.93h0.62v5.93zM27.62 26.20v-2.71h0.62v2.71zM32.68 26.20v-2.37h0.62v2.37zM37.73 26.20v-9.52h0.62v9.52zM42.79 26.20v-2.71h0.62v2.71zM47.84 26.20v-1.15h0.62v1.15zM52.90 26.20v-6.43h0.62v6.43zM57.95 26.20v-3.24h0.62v3.24z" fill="#4472c4" opacity="0.5"/><path d="M8.05 26.20v-1.81h0.62v1.81zM13.11 26.20v-4.74h0.62v4.74zM18.16 26.20v-2.15h0.62v2.15zM23.22 26.20v-4.77h0.62v4.77zM28.27 26.20v-2.12h0.62v2.12zM33.33 26.20v-1.68h0.62v1.68zM38.38 26.20v-11.29h0.62v11.29zM43.44 26.20v-2.96h0.62v2.96zM48.49 26.20v-1.40h0.62v1.40zM53.54 26.20v-9.39h0.62v9.39zM58.60 26.20v-3.84h0.62v3.84z" fill="#ed7d31" opacity="0.5"/><path d="M8.70 26.20v-2.46h0.62v2.46zM13.76 26.20v-3.15h0.62v3.15zM18.81 26.20v-4.12h0.62v4.12zM23.86 26.20v-4.21h0.62v4.21zM28.92 26.20v-2.78h0.62v2.78zM33.97 26.20v-1.40h0.62v1.40zM39.03 26.20v-8.33h0.62v8.33zM44.08 26.20v-1.84h0.62v1.84zM49.14 26.20v-2.46h0.62v2.46zM54.19 26.20v-7.92h0.62v7.92zM59.25 26.20v-3.78h0.62v3.78z" fill="#a5a5a5" opacity="0.5"/><path d="M9.35 26.20v-4.46h0.62v4.46zM14.40 26.20v-3.06h0.62v3.06zM19.46 26.20v-5.12h0.62v5.12zM24.51 26.20v-6.33h0.62v6.33zM29.57 26.20v-6.36h0.62v6.36zM34.62 26.20v-2.78h0.62v2.78zM39.68 26.20v-5.15h0.62v5.15zM44.73 26.20v-2.37h0.62v2.37zM49.78 26.20v-3.24h0.62v3.24zM54.84 26.20v-3.34h0.62v3.34zM59.89 26.20v-5.90h0.62v5.90z" fill="#ffc000" opacity="0.5"/><path d="M10.00 26.20v-10.02h0.62v10.02zM15.05 26.20v-6.30h0.62v6.30zM20.10 26.20v-4.46h0.62v4.46zM25.16 26.20v-11.11h0.62v11.11zM30.21 26.20v-7.68h0.62v7.68zM35.27 26.20v-2.40h0.62v2.40zM40.32 26.20v-5.49h0.62v5.49zM45.38 26.20v-2.71h0.62v2.71zM50.43 26.20v-6.27h0.62v6.27zM55.49 26.20v-3.40h0.62v3.40zM60.54 26.20v-6.27h0.62v6.27z" fill="#5b9bd5" opacity="0.5"/><path d="M10.64 26.20v-13.14h0.62v13.14zM15.70 26.20v-7.21h0.62v7.21zM20.75 26.20v-3.87h0.62v3.87zM25.81 26.20v-15.54h0.62v15.54zM30.86 26.20v-8.70h0.62v8.70zM35.92 26.20v-3.37h0.62v3.37zM40.97 26.20v-2.78h0.62v2.78zM46.02 26.20v-2.09h0.62v2.09zM51.08 26.20v-7.24h0.62v7.24zM56.13 26.20v-3.78h0.62v3.78zM61.19 26.20v-8.67h0.62v8.67z" fill="#70ad47" opacity="0.5"/><path d="M6.3 26.5H62.9" stroke="#cfcfcf" stroke-width=".5"/><path d="M2.2 25.8h2.6v.9h-2.6zM2.2 22.7h2.6v.9h-2.6zM2.2 19.6h2.6v.9h-2.6zM2.2 16.4h2.6v.9h-2.6zM2.2 13.3h2.6v.9h-2.6zM2.2 10.2h2.6v.9h-2.6z" fill="#9c9c9c" opacity=".5"/><path d="M9.9 27.6l-3.7 4.3M15.0 27.6l-3.7 4.3M20.0 27.6l-3.7 4.3M25.1 27.6l-3.7 4.3M30.2 27.6l-3.7 4.3M35.2 27.6l-3.7 4.3M40.3 27.6l-3.7 4.3M45.3 27.6l-3.7 4.3M50.4 27.6l-3.7 4.3M55.4 27.6l-3.7 4.3M60.5 27.6l-3.7 4.3" stroke="#8e8e8e" stroke-width=".9" opacity=".75" fill="none"/><rect x="14.3" y="35.7" width="4.4" height=".8" fill="#4472c4" opacity="0.42"/><rect x="20.6" y="35.7" width="4.4" height=".8" fill="#ed7d31" opacity="0.42"/><rect x="26.9" y="35.7" width="4.4" height=".8" fill="#a5a5a5" opacity="0.42"/><rect x="33.2" y="35.7" width="4.4" height=".8" fill="#ffc000" opacity="0.42"/><rect x="39.5" y="35.7" width="4.4" height=".8" fill="#5b9bd5" opacity="0.42"/><rect x="45.8" y="35.7" width="4.4" height=".8" fill="#70ad47" opacity="0.42"/></svg>
<svg class="abs" style="left:659.5px;top:29.0px" width="64.6" height="38.8" viewBox="0 0 64.6 38.8"><defs><radialGradient id="gd" cx="50%" cy="45%" r="65%"><stop offset="0" stop-color="#5c5c5c"/><stop offset=".7" stop-color="#434343"/><stop offset="1" stop-color="#2e2e2e"/></radialGradient></defs><rect width="64.6" height="38.8" fill="url(#gd)"/><text x="33.1" y="4.38" font-size="2.99" text-anchor="middle" fill="#f0f0f0" font-weight="bold" font-family="Liberation Sans, sans-serif">Diagramrubrik</text><path d="M6.62 27.00v-1.56h0.63v1.56zM11.74 27.00v-5.84h0.63v5.84zM16.87 27.00v-2.89h0.63v2.89zM22.00 27.00v-6.31h0.63v6.31zM27.12 27.00v-2.89h0.63v2.89zM32.25 27.00v-2.52h0.63v2.52zM37.38 27.00v-10.13h0.63v10.13zM42.51 27.00v-2.89h0.63v2.89zM47.63 27.00v-1.23h0.63v1.23zM52.76 27.00v-6.84h0.63v6.84zM57.89 27.00v-3.45h0.63v3.45z" fill="#4472c4" opacity="0.78"/><path d="M7.27 27.00v-1.93h0.63v1.93zM12.40 27.00v-5.05h0.63v5.05zM17.53 27.00v-2.29h0.63v2.29zM22.65 27.00v-5.08h0.63v5.08zM27.78 27.00v-2.26h0.63v2.26zM32.91 27.00v-1.79h0.63v1.79zM38.04 27.00v-12.02h0.63v12.02zM43.16 27.00v-3.15h0.63v3.15zM48.29 27.00v-1.49h0.63v1.49zM53.42 27.00v-9.99h0.63v9.99zM58.54 27.00v-4.08h0.63v4.08z" fill="#ed7d31" opacity="0.78"/><path d="M7.93 27.00v-2.62h0.63v2.62zM13.06 27.00v-3.35h0.63v3.35zM18.18 27.00v-4.38h0.63v4.38zM23.31 27.00v-4.48h0.63v4.48zM28.44 27.00v-2.95h0.63v2.95zM33.56 27.00v-1.49h0.63v1.49zM38.69 27.00v-8.86h0.63v8.86zM43.82 27.00v-1.96h0.63v1.96zM48.95 27.00v-2.62h0.63v2.62zM54.07 27.00v-8.43h0.63v8.43zM59.20 27.00v-4.02h0.63v4.02z" fill="#a5a5a5" opacity="0.78"/><path d="M8.58 27.00v-4.75h0.63v4.75zM13.71 27.00v-3.25h0.63v3.25zM18.84 27.00v-5.44h0.63v5.44zM23.97 27.00v-6.74h0.63v6.74zM29.09 27.00v-6.77h0.63v6.77zM34.22 27.00v-2.95h0.63v2.95zM39.35 27.00v-5.48h0.63v5.48zM44.48 27.00v-2.52h0.63v2.52zM49.60 27.00v-3.45h0.63v3.45zM54.73 27.00v-3.55h0.63v3.55zM59.86 27.00v-6.27h0.63v6.27z" fill="#ffc000" opacity="0.78"/><path d="M9.24 27.00v-10.66h0.63v10.66zM14.37 27.00v-6.71h0.63v6.71zM19.50 27.00v-4.75h0.63v4.75zM24.62 27.00v-11.82h0.63v11.82zM29.75 27.00v-8.17h0.63v8.17zM34.88 27.00v-2.56h0.63v2.56zM40.01 27.00v-5.84h0.63v5.84zM45.13 27.00v-2.89h0.63v2.89zM50.26 27.00v-6.67h0.63v6.67zM55.39 27.00v-3.62h0.63v3.62zM60.51 27.00v-6.67h0.63v6.67z" fill="#5b9bd5" opacity="0.78"/><path d="M9.90 27.00v-13.98h0.63v13.98zM15.03 27.00v-7.67h0.63v7.67zM20.15 27.00v-4.12h0.63v4.12zM25.28 27.00v-16.53h0.63v16.53zM30.41 27.00v-9.26h0.63v9.26zM35.53 27.00v-3.59h0.63v3.59zM40.66 27.00v-2.95h0.63v2.95zM45.79 27.00v-2.22h0.63v2.22zM50.92 27.00v-7.70h0.63v7.70zM56.04 27.00v-4.02h0.63v4.02zM61.17 27.00v-9.23h0.63v9.23z" fill="#70ad47" opacity="0.78"/><path d="M1.4 26.6h2.6v.9h-2.6zM1.4 23.3h2.6v.9h-2.6zM1.4 20.0h2.6v.9h-2.6zM1.4 16.6h2.6v.9h-2.6zM1.4 13.3h2.6v.9h-2.6zM1.4 10.0h2.6v.9h-2.6z" fill="#ddd" opacity=".5"/><path d="M9.2 28.4l-3.7 4.3M14.3 28.4l-3.7 4.3M19.4 28.4l-3.7 4.3M24.6 28.4l-3.7 4.3M29.7 28.4l-3.7 4.3M34.8 28.4l-3.7 4.3M39.9 28.4l-3.7 4.3M45.1 28.4l-3.7 4.3M50.2 28.4l-3.7 4.3M55.3 28.4l-3.7 4.3M60.5 28.4l-3.7 4.3" stroke="#e2e2e2" stroke-width=".9" opacity=".75" fill="none"/><rect x="14.3" y="35.7" width="4.4" height=".8" fill="#4472c4" opacity="0.8"/><rect x="20.6" y="35.7" width="4.4" height=".8" fill="#ed7d31" opacity="0.8"/><rect x="26.9" y="35.7" width="4.4" height=".8" fill="#a5a5a5" opacity="0.8"/><rect x="33.2" y="35.7" width="4.4" height=".8" fill="#ffc000" opacity="0.8"/><rect x="39.5" y="35.7" width="4.4" height=".8" fill="#5b9bd5" opacity="0.8"/><rect x="45.8" y="35.7" width="4.4" height=".8" fill="#70ad47" opacity="0.8"/></svg>
<div id="fbar" class="abs" style="background:linear-gradient(#d6d6d6 0,#dcdcdc 1.5px,#e3e3e3 4px,#e6e6e6 6px,#e6e6e6 100%)"></div>
<div class="box" style="left:-2px;width:50.1px"></div>
<div class="box" style="left:72.3px;width:87.4px"></div>
<div class="box" style="left:162.4px;width:870px"></div>
<div class="t" style="left:-5.3px;top:108.7px;font-size:10.7px;color:#444">am 4</div>
<svg class="abs" style="left:37px;top:111.5px" width="7" height="5" viewBox="0 0 7 5"><path d="M.8 .8h5.4L3.5 3.9z" fill="#666"/></svg>
<svg class="abs" style="left:58.6px;top:109px" width="3" height="10" viewBox="0 0 3 10"><circle cx="1.5" cy="1.5" r=".8" fill="#a6a6a6"/><circle cx="1.5" cy="5" r=".8" fill="#a6a6a6"/><circle cx="1.5" cy="8.5" r=".8" fill="#a6a6a6"/></svg>
<svg class="abs" style="left:82px;top:109px" width="70" height="11" viewBox="0 0 70 11"><path d="M1 1.5l7 7.5M8 1.5l-7 7.5" stroke="#b4b4b4" stroke-width="1.1" fill="none"/><path d="M29.5 5.8l2.8 3L37.8 2" stroke="#b4b4b4" stroke-width="1.2" fill="none"/></svg>
<div class="t" style="left:139.5px;top:106.8px;font-size:12.8px;color:#666;font-weight:bold;font-family:'Liberation Serif',serif;font-style:italic">f<span style="font-size:8.8px">x</span></div>
<div class="ch" style="left:-15.9px;width:51.3px">A</div>
<div class="chs" style="left:34.9px"></div>
<div class="ch" style="left:35.4px;width:84.9px">B</div>
<div class="chs" style="left:119.8px"></div>
<div class="ch" style="left:120.3px;width:61.5px">C</div>
<div class="chs" style="left:181.3px"></div>
<div class="ch" style="left:181.8px;width:61.5px">D</div>
<div class="chs" style="left:242.8px"></div>
<div class="ch" style="left:243.3px;width:61.5px">E</div>
<div class="chs" style="left:304.3px"></div>
<div class="ch" style="left:304.8px;width:61.5px">F</div>
<div class="chs" style="left:365.8px"></div>
<div class="ch" style="left:366.3px;width:61.5px">G</div>
<div class="chs" style="left:427.3px"></div>
<div class="ch" style="left:427.8px;width:61.5px">H</div>
<div class="chs" style="left:488.8px"></div>
<div class="ch" style="left:489.3px;width:110.0px">I</div>
<div class="chs" style="left:598.8px"></div>
<div class="ch" style="left:599.3px;width:51.3px">J</div>
<div class="chs" style="left:650.1px"></div>
<div class="ch" style="left:650.6px;width:51.3px">K</div>
<div class="chs" style="left:701.4px"></div>
<div class="ch" style="left:701.9px;width:51.3px">L</div>
<div class="chs" style="left:752.7px"></div>
<div class="ch" style="left:753.2px;width:51.3px">M</div>
<div class="chs" style="left:804.0px"></div>
<div class="ch" style="left:804.5px;width:51.3px">N</div>
<div class="chs" style="left:855.3px"></div>
<div class="ch" style="left:855.8px;width:51.3px">O</div>
<div class="chs" style="left:906.6px"></div>
<div class="ch" style="left:907.1px;width:51.3px">P</div>
<div class="chs" style="left:957.9px"></div>
<div class="ch" style="left:958.4px;width:51.3px">Q</div>
<div class="chs" style="left:1009.2px"></div>
<div class="ch" style="left:1009.7px;width:51.3px">R</div>
<div class="chs" style="left:1060.5px"></div>
<div class="abs" style="left:0;top:145.8px;width:1024px;height:1.2px;background:#b5b5b5"></div>
<svg class="abs" style="left:0;top:0" width="1024" height="553" viewBox="0 0 1024 553"><path d="M0 172.50H1024M0 189.50H1024M0 206.22H1024M0 222.94H1024M0 239.66H1024M0 256.38H1024M0 273.10H1024M0 289.82H1024M0 306.54H1024M0 323.26H1024M0 339.98H1024M0 356.70H1024M0 373.42H1024M0 390.10H1024M0 405.47H1024M0 420.84H1024M0 436.21H1024M0 451.58H1024M0 466.95H1024M0 482.32H1024M0 497.69H1024M0 513.06H1024M0 528.43H1024M0 543.80H1024M35.40 146.5V553M120.30 146.5V553M181.80 146.5V553M243.30 146.5V553M304.80 146.5V553M366.30 146.5V553M427.80 146.5V553M489.30 146.5V553M599.30 146.5V553M650.60 146.5V553M701.90 146.5V553M753.20 146.5V553M804.50 146.5V553M855.80 146.5V553M907.10 146.5V553M958.40 146.5V553M1009.70 146.5V553" stroke="#dedede" stroke-width="1" fill="none"/></svg>
<div class="abs" style="left:120.80px;top:147.00px;width:368.00px;height:25.00px;background:#fff;"></div>
<div class="t" style="left:247.2px;top:154.97px;font-size:14.4px;letter-spacing:0.429px;color:#1a1a1a;line-height:16.08px">Sålda paketresor</div>
<div class="abs" style="left:120.30px;top:172.50px;width:369.00px;height:17.00px;background:#adadc4;"></div>
<div class="cell txt" style="left:120.30px;top:173.05px;width:61.50px;height:17.00px;line-height:17.00px;color:#2e2e38;padding-left:2.50px;letter-spacing:0.353px">Januari</div>
<div class="cell txt" style="left:181.80px;top:173.05px;width:61.50px;height:17.00px;line-height:17.00px;color:#2e2e38;padding-left:2.80px;letter-spacing:0.505px">Februari</div>
<div class="cell txt" style="left:243.30px;top:173.05px;width:61.50px;height:17.00px;line-height:17.00px;color:#2e2e38;padding-left:2.70px;letter-spacing:0.585px">Mars</div>
<div class="cell txt" style="left:304.80px;top:173.05px;width:61.50px;height:17.00px;line-height:17.00px;color:#2e2e38;padding-left:2.80px;letter-spacing:0.648px">April</div>
<div class="cell txt" style="left:366.30px;top:173.05px;width:61.50px;height:17.00px;line-height:17.00px;color:#2e2e38;padding-left:2.80px;letter-spacing:1.087px">Maj</div>
<div class="cell txt" style="left:427.80px;top:173.05px;width:61.50px;height:17.00px;line-height:17.00px;color:#2e2e38;padding-left:2.70px;letter-spacing:0.140px">Juni</div>
<div class="abs" style="left:489.80px;top:173.00px;width:109.20px;height:16.50px;background:#a6ca8c;"></div>
<div class="cell txt" style="left:489.30px;top:173.05px;width:110.00px;height:17.00px;line-height:17.00px;padding-left:3.30px;letter-spacing:0.813px">Totalt/Destination</div>
<div class="abs" style="left:35.90px;top:189.50px;width:83.90px;height:16.72px;background:#dcdcee;"></div>
<div class="abs" style="left:37.30px;top:191.10px;width:81.10px;height:15.12px;background:#89a2d9;"></div>
<div class="abs" style="left:120.80px;top:189.50px;width:368.00px;height:16.72px;background:#e9eefa;"></div>
<div class="cell txt" style="left:35.40px;top:190.05px;width:84.90px;height:16.72px;line-height:16.72px;color:#26304a;padding-left:2.90px;letter-spacing:0.624px">Italien</div>
<div class="cell num" style="left:120.30px;top:190.05px;width:61.50px;height:16.72px;line-height:16.72px;">47</div>
<div class="cell num" style="left:181.80px;top:190.05px;width:61.50px;height:16.72px;line-height:16.72px;">58</div>
<div class="cell num" style="left:243.30px;top:190.05px;width:61.50px;height:16.72px;line-height:16.72px;">79</div>
<div class="cell num" style="left:304.80px;top:190.05px;width:61.50px;height:16.72px;line-height:16.72px;">143</div>
<div class="cell num" style="left:366.30px;top:190.05px;width:61.50px;height:16.72px;line-height:16.72px;">321</div>
<div class="cell num" style="left:427.80px;top:190.05px;width:61.50px;height:16.72px;line-height:16.72px;">421</div>
<div class="cell num b sm" style="left:489.30px;top:190.05px;width:110.00px;height:16.72px;line-height:16.72px;padding-right:2.4px;margin-top:1.4px">1069</div>
<div class="abs" style="left:35.90px;top:206.22px;width:83.90px;height:16.72px;background:#dcdcee;"></div>
<div class="abs" style="left:37.30px;top:206.22px;width:81.10px;height:16.72px;background:#cdcee4;"></div>
<div class="abs" style="left:120.80px;top:206.22px;width:368.00px;height:16.72px;background:#e9eefa;"></div>
<div class="cell txt" style="left:35.40px;top:206.77px;width:84.90px;height:16.72px;line-height:16.72px;color:#3a3a48;padding-left:2.90px;letter-spacing:0.357px">Frankrike</div>
<div class="cell num" style="left:120.30px;top:206.77px;width:61.50px;height:16.72px;line-height:16.72px;">176</div>
<div class="cell num" style="left:181.80px;top:206.77px;width:61.50px;height:16.72px;line-height:16.72px;">152</div>
<div class="cell num" style="left:243.30px;top:206.77px;width:61.50px;height:16.72px;line-height:16.72px;">101</div>
<div class="cell num" style="left:304.80px;top:206.77px;width:61.50px;height:16.72px;line-height:16.72px;">98</div>
<div class="cell num" style="left:366.30px;top:206.77px;width:61.50px;height:16.72px;line-height:16.72px;">202</div>
<div class="cell num" style="left:427.80px;top:206.77px;width:61.50px;height:16.72px;line-height:16.72px;">231</div>
<div class="cell num b sm" style="left:489.30px;top:206.77px;width:110.00px;height:16.72px;line-height:16.72px;padding-right:2.4px;margin-top:1.4px">960</div>
<div class="abs" style="left:35.90px;top:222.94px;width:83.90px;height:16.72px;background:#dcdcee;"></div>
<div class="abs" style="left:37.30px;top:222.94px;width:81.10px;height:16.72px;background:#89a2d9;"></div>
<div class="abs" style="left:120.80px;top:222.94px;width:368.00px;height:16.72px;background:#e9eefa;"></div>
<div class="cell txt" style="left:35.40px;top:223.49px;width:84.90px;height:16.72px;line-height:16.72px;color:#26304a;padding-left:2.90px;letter-spacing:0.313px">Tyskland</div>
<div class="cell num" style="left:120.30px;top:223.49px;width:61.50px;height:16.72px;line-height:16.72px;">87</div>
<div class="cell num" style="left:181.80px;top:223.49px;width:61.50px;height:16.72px;line-height:16.72px;">69</div>
<div class="cell num" style="left:243.30px;top:223.49px;width:61.50px;height:16.72px;line-height:16.72px;">132</div>
<div class="cell num" style="left:304.80px;top:223.49px;width:61.50px;height:16.72px;line-height:16.72px;">164</div>
<div class="cell num" style="left:366.30px;top:223.49px;width:61.50px;height:16.72px;line-height:16.72px;">143</div>
<div class="cell num" style="left:427.80px;top:223.49px;width:61.50px;height:16.72px;line-height:16.72px;">124</div>
<div class="cell num b sm" style="left:489.30px;top:223.49px;width:110.00px;height:16.72px;line-height:16.72px;padding-right:2.4px;margin-top:1.4px">719</div>
<div class="abs" style="left:35.90px;top:239.66px;width:83.90px;height:16.72px;background:#dcdcee;"></div>
<div class="abs" style="left:37.30px;top:239.66px;width:81.10px;height:16.72px;background:#cdcee4;"></div>
<div class="abs" style="left:120.80px;top:239.66px;width:368.00px;height:16.72px;background:#e9eefa;"></div>
<div class="cell txt" style="left:35.40px;top:240.21px;width:84.90px;height:16.72px;line-height:16.72px;color:#3a3a48;padding-left:2.90px;letter-spacing:0.272px">Spanien</div>
<div class="cell num" style="left:120.30px;top:240.21px;width:61.50px;height:16.72px;line-height:16.72px;">190</div>
<div class="cell num" style="left:181.80px;top:240.21px;width:61.50px;height:16.72px;line-height:16.72px;">153</div>
<div class="cell num" style="left:243.30px;top:240.21px;width:61.50px;height:16.72px;line-height:16.72px;">135</div>
<div class="cell num" style="left:304.80px;top:240.21px;width:61.50px;height:16.72px;line-height:16.72px;">203</div>
<div class="cell num" style="left:366.30px;top:240.21px;width:61.50px;height:16.72px;line-height:16.72px;">356</div>
<div class="cell num" style="left:427.80px;top:240.21px;width:61.50px;height:16.72px;line-height:16.72px;">498</div>
<div class="cell num b sm" style="left:489.30px;top:240.21px;width:110.00px;height:16.72px;line-height:16.72px;padding-right:2.4px;margin-top:1.4px">1535</div>
<div class="abs" style="left:35.90px;top:256.38px;width:83.90px;height:16.72px;background:#dcdcee;"></div>
<div class="abs" style="left:37.30px;top:256.38px;width:81.10px;height:16.72px;background:#89a2d9;"></div>
<div class="abs" style="left:120.80px;top:256.38px;width:368.00px;height:16.72px;background:#e9eefa;"></div>
<div class="cell txt" style="left:35.40px;top:256.93px;width:84.90px;height:16.72px;line-height:16.72px;color:#26304a;padding-left:2.90px;letter-spacing:0.481px">Grekland</div>
<div class="cell num" style="left:120.30px;top:256.93px;width:61.50px;height:16.72px;line-height:16.72px;">87</div>
<div class="cell num" style="left:181.80px;top:256.93px;width:61.50px;height:16.72px;line-height:16.72px;">68</div>
<div class="cell num" style="left:243.30px;top:256.93px;width:61.50px;height:16.72px;line-height:16.72px;">89</div>
<div class="cell num" style="left:304.80px;top:256.93px;width:61.50px;height:16.72px;line-height:16.72px;">204</div>
<div class="cell num" style="left:366.30px;top:256.93px;width:61.50px;height:16.72px;line-height:16.72px;">246</div>
<div class="cell num" style="left:427.80px;top:256.93px;width:61.50px;height:16.72px;line-height:16.72px;">279</div>
<div class="cell num b sm" style="left:489.30px;top:256.93px;width:110.00px;height:16.72px;line-height:16.72px;padding-right:2.4px;margin-top:1.4px">973</div>
<div class="abs" style="left:35.90px;top:273.10px;width:83.90px;height:16.72px;background:#dcdcee;"></div>
<div class="abs" style="left:37.30px;top:273.10px;width:81.10px;height:16.72px;background:#cdcee4;"></div>
<div class="abs" style="left:120.80px;top:273.10px;width:368.00px;height:16.72px;background:#e9eefa;"></div>
<div class="cell txt" style="left:35.40px;top:273.65px;width:84.90px;height:16.72px;line-height:16.72px;color:#3a3a48;padding-left:2.90px;letter-spacing:0.373px">Slovenien</div>
<div class="cell num" style="left:120.30px;top:273.65px;width:61.50px;height:16.72px;line-height:16.72px;">76</div>
<div class="cell num" style="left:181.80px;top:273.65px;width:61.50px;height:16.72px;line-height:16.72px;">54</div>
<div class="cell num" style="left:243.30px;top:273.65px;width:61.50px;height:16.72px;line-height:16.72px;">45</div>
<div class="cell num" style="left:304.80px;top:273.65px;width:61.50px;height:16.72px;line-height:16.72px;">89</div>
<div class="cell num" style="left:366.30px;top:273.65px;width:61.50px;height:16.72px;line-height:16.72px;">77</div>
<div class="cell num" style="left:427.80px;top:273.65px;width:61.50px;height:16.72px;line-height:16.72px;">108</div>
<div class="cell num b sm" style="left:489.30px;top:273.65px;width:110.00px;height:16.72px;line-height:16.72px;padding-right:2.4px;margin-top:1.4px">449</div>
<div class="abs" style="left:35.90px;top:289.82px;width:83.90px;height:16.72px;background:#dcdcee;"></div>
<div class="abs" style="left:37.30px;top:289.82px;width:81.10px;height:16.72px;background:#89a2d9;"></div>
<div class="abs" style="left:120.80px;top:289.82px;width:368.00px;height:16.72px;background:#e9eefa;"></div>
<div class="cell txt" style="left:35.40px;top:290.37px;width:84.90px;height:16.72px;line-height:16.72px;color:#26304a;padding-left:2.90px;letter-spacing:0.360px">Norge</div>
<div class="cell num" style="left:120.30px;top:290.37px;width:61.50px;height:16.72px;line-height:16.72px;">305</div>
<div class="cell num" style="left:181.80px;top:290.37px;width:61.50px;height:16.72px;line-height:16.72px;">362</div>
<div class="cell num" style="left:243.30px;top:290.37px;width:61.50px;height:16.72px;line-height:16.72px;">267</div>
<div class="cell num" style="left:304.80px;top:290.37px;width:61.50px;height:16.72px;line-height:16.72px;">165</div>
<div class="cell num" style="left:366.30px;top:290.37px;width:61.50px;height:16.72px;line-height:16.72px;">176</div>
<div class="cell num" style="left:427.80px;top:290.37px;width:61.50px;height:16.72px;line-height:16.72px;">89</div>
<div class="cell num b sm" style="left:489.30px;top:290.37px;width:110.00px;height:16.72px;line-height:16.72px;padding-right:2.4px;margin-top:1.4px">1364</div>
<div class="abs" style="left:35.90px;top:306.54px;width:83.90px;height:16.72px;background:#dcdcee;"></div>
<div class="abs" style="left:37.30px;top:306.54px;width:81.10px;height:16.72px;background:#cdcee4;"></div>
<div class="abs" style="left:120.80px;top:306.54px;width:368.00px;height:16.72px;background:#e9eefa;"></div>
<div class="cell txt" style="left:35.40px;top:307.09px;width:84.90px;height:16.72px;line-height:16.72px;color:#3a3a48;padding-left:2.90px;letter-spacing:0.269px">Island</div>
<div class="cell num" style="left:120.30px;top:307.09px;width:61.50px;height:16.72px;line-height:16.72px;">87</div>
<div class="cell num" style="left:181.80px;top:307.09px;width:61.50px;height:16.72px;line-height:16.72px;">95</div>
<div class="cell num" style="left:243.30px;top:307.09px;width:61.50px;height:16.72px;line-height:16.72px;">59</div>
<div class="cell num" style="left:304.80px;top:307.09px;width:61.50px;height:16.72px;line-height:16.72px;">76</div>
<div class="cell num" style="left:366.30px;top:307.09px;width:61.50px;height:16.72px;line-height:16.72px;">87</div>
<div class="cell num" style="left:427.80px;top:307.09px;width:61.50px;height:16.72px;line-height:16.72px;">67</div>
<div class="cell num b sm" style="left:489.30px;top:307.09px;width:110.00px;height:16.72px;line-height:16.72px;padding-right:2.4px;margin-top:1.4px">471</div>
<div class="abs" style="left:35.90px;top:323.26px;width:83.90px;height:16.72px;background:#dcdcee;"></div>
<div class="abs" style="left:37.30px;top:323.26px;width:81.10px;height:16.72px;background:#89a2d9;"></div>
<div class="abs" style="left:120.80px;top:323.26px;width:368.00px;height:16.72px;background:#e9eefa;"></div>
<div class="cell txt" style="left:35.40px;top:323.81px;width:84.90px;height:16.72px;line-height:16.72px;color:#26304a;padding-left:2.90px;letter-spacing:0.875px">Malta</div>
<div class="cell num" style="left:120.30px;top:323.81px;width:61.50px;height:16.72px;line-height:16.72px;">37</div>
<div class="cell num" style="left:181.80px;top:323.81px;width:61.50px;height:16.72px;line-height:16.72px;">45</div>
<div class="cell num" style="left:243.30px;top:323.81px;width:61.50px;height:16.72px;line-height:16.72px;">79</div>
<div class="cell num" style="left:304.80px;top:323.81px;width:61.50px;height:16.72px;line-height:16.72px;">104</div>
<div class="cell num" style="left:366.30px;top:323.81px;width:61.50px;height:16.72px;line-height:16.72px;">201</div>
<div class="cell num" style="left:427.80px;top:323.81px;width:61.50px;height:16.72px;line-height:16.72px;">232</div>
<div class="cell num b sm" style="left:489.30px;top:323.81px;width:110.00px;height:16.72px;line-height:16.72px;padding-right:2.4px;margin-top:1.4px">698</div>
<div class="abs" style="left:35.90px;top:339.98px;width:83.90px;height:16.72px;background:#dcdcee;"></div>
<div class="abs" style="left:37.30px;top:339.98px;width:81.10px;height:16.72px;background:#cdcee4;"></div>
<div class="abs" style="left:120.80px;top:339.98px;width:368.00px;height:16.72px;background:#e9eefa;"></div>
<div class="cell txt" style="left:35.40px;top:340.53px;width:84.90px;height:16.72px;line-height:16.72px;color:#3a3a48;padding-left:2.90px;letter-spacing:0.423px">Österrike</div>
<div class="cell num" style="left:120.30px;top:340.53px;width:61.50px;height:16.72px;line-height:16.72px;">206</div>
<div class="cell num" style="left:181.80px;top:340.53px;width:61.50px;height:16.72px;line-height:16.72px;">301</div>
<div class="cell num" style="left:243.30px;top:340.53px;width:61.50px;height:16.72px;line-height:16.72px;">254</div>
<div class="cell num" style="left:304.80px;top:340.53px;width:61.50px;height:16.72px;line-height:16.72px;">107</div>
<div class="cell num" style="left:366.30px;top:340.53px;width:61.50px;height:16.72px;line-height:16.72px;">109</div>
<div class="cell num" style="left:427.80px;top:340.53px;width:61.50px;height:16.72px;line-height:16.72px;">121</div>
<div class="cell num b sm" style="left:489.30px;top:340.53px;width:110.00px;height:16.72px;line-height:16.72px;padding-right:2.4px;margin-top:1.4px">1098</div>
<div class="abs" style="left:35.90px;top:356.70px;width:83.90px;height:16.72px;background:#dcdcee;"></div>
<div class="abs" style="left:37.30px;top:356.70px;width:81.10px;height:15.52px;background:#89a2d9;"></div>
<div class="abs" style="left:120.80px;top:356.70px;width:368.00px;height:16.72px;background:#e9eefa;"></div>
<div class="cell txt" style="left:35.40px;top:357.25px;width:84.90px;height:16.72px;line-height:16.72px;color:#26304a;padding-left:2.90px;letter-spacing:0.403px">Bulgarien</div>
<div class="cell num" style="left:120.30px;top:357.25px;width:61.50px;height:16.72px;line-height:16.72px;">104</div>
<div class="cell num" style="left:181.80px;top:357.25px;width:61.50px;height:16.72px;line-height:16.72px;">123</div>
<div class="cell num" style="left:243.30px;top:357.25px;width:61.50px;height:16.72px;line-height:16.72px;">121</div>
<div class="cell num" style="left:304.80px;top:357.25px;width:61.50px;height:16.72px;line-height:16.72px;">189</div>
<div class="cell num" style="left:366.30px;top:357.25px;width:61.50px;height:16.72px;line-height:16.72px;">201</div>
<div class="cell num" style="left:427.80px;top:357.25px;width:61.50px;height:16.72px;line-height:16.72px;">278</div>
<div class="cell num b sm" style="left:489.30px;top:357.25px;width:110.00px;height:16.72px;line-height:16.72px;padding-right:2.4px;margin-top:1.4px">1016</div>
<svg class="abs" style="left:0;top:0" width="1024" height="553" viewBox="0 0 1024 553"><path d="M120.30 206.22H489.30M120.30 222.94H489.30M120.30 239.66H489.30M120.30 256.38H489.30M120.30 273.10H489.30M120.30 289.82H489.30M120.30 306.54H489.30M120.30 323.26H489.30M120.30 339.98H489.30M120.30 356.70H489.30M181.80 189.50V373.42M243.30 189.50V373.42M304.80 189.50V373.42M366.30 189.50V373.42M427.80 189.50V373.42" stroke="#d9dfef" stroke-width="1" fill="none"/><path d="M36.40 206.22H119.30M36.40 222.94H119.30M36.40 239.66H119.30M36.40 256.38H119.30M36.40 273.10H119.30M36.40 289.82H119.30M36.40 306.54H119.30M36.40 323.26H119.30M36.40 339.98H119.30M36.40 356.70H119.30" stroke="#c3c8e0" stroke-width=".6" fill="none" opacity=".6"/></svg>
<div class="abs" style="left:35.90px;top:374.42px;width:453.40px;height:15.38px;background:#d9e1f2;"></div>
<div class="cell txt b" style="left:35.40px;top:373.97px;width:84.90px;height:16.68px;line-height:16.68px;font-size:11px;padding-left:2.90px;letter-spacing:0.455px">Totalt</div>
<div class="cell num b" style="left:120.30px;top:373.97px;width:61.50px;height:16.68px;line-height:16.68px;font-size:11.3px">1402</div>
<div class="cell num b" style="left:181.80px;top:373.97px;width:61.50px;height:16.68px;line-height:16.68px;font-size:11.3px">1480</div>
<div class="cell num b" style="left:243.30px;top:373.97px;width:61.50px;height:16.68px;line-height:16.68px;font-size:11.3px">1361</div>
<div class="cell num b" style="left:304.80px;top:373.97px;width:61.50px;height:16.68px;line-height:16.68px;font-size:11.3px">1542</div>
<div class="cell num b" style="left:366.30px;top:373.97px;width:61.50px;height:16.68px;line-height:16.68px;font-size:11.3px">2119</div>
<div class="cell num b" style="left:427.80px;top:373.97px;width:61.50px;height:16.68px;line-height:16.68px;font-size:11.3px">2448</div>
<div class="abs" style="left:489.80px;top:374.22px;width:109.20px;height:15.58px;background:#a6ca8c;"></div>
<div class="cell num b sm" style="left:489.30px;top:373.97px;width:110.00px;height:16.68px;line-height:16.68px;padding-right:2.4px;margin-top:1.2px">10352</div>
<div class="abs" style="left:489.80px;top:372.52px;width:109.50px;height:1.80px;background:#3a3a3a;"></div>
<svg class="abs" style="left:0;top:0" width="1024" height="553" viewBox="0 0 1024 553"><path d="M120.30 189.30H35.40V373.42H120.30" fill="none" stroke="#9f7fcc" stroke-width="1.6"/><path d="M120.80 190.50V373.42" fill="none" stroke="#7f87b8" stroke-width="1.6"/><path d="M489.30 189.50V373.42H120.30" fill="none" stroke="#5f8bd0" stroke-width="1.8"/><rect x="120.30" y="172.50" width="369.00" height="17.00" fill="none" stroke="#d9595b" stroke-width="1.3"/><rect x="34.00" y="188.10" width="2.8" height="2.8" fill="#8a6bc0"/><rect x="34.00" y="372.02" width="2.8" height="2.8" fill="#8a6bc0"/><rect x="118.90" y="372.02" width="2.8" height="2.8" fill="#8a6bc0"/><rect x="487.90" y="372.02" width="2.8" height="2.8" fill="#4f7fc8"/><rect x="118.80" y="171.00" width="3" height="3" fill="#d84a4c"/><rect x="118.80" y="188.00" width="3" height="3" fill="#d84a4c"/><rect x="487.80" y="171.00" width="3" height="3" fill="#d84a4c"/><rect x="487.80" y="188.00" width="3" height="3" fill="#d84a4c"/></svg>
<svg class="abs" style="left:0;top:0;font-family:'Liberation Sans', sans-serif" width="1024" height="553" viewBox="0 0 1024 553"><rect x="646.0" y="172.4" width="385.4000000000001" height="230.99999999999997" fill="#fff" stroke="#b2b2b2" stroke-width="1.1"/><path d="M675.6 329.60H1017.8" stroke="#e3e3e3" stroke-width=".9"/><text x="666.6" y="332.60" font-size="8.4" fill="#5f5f5f" text-anchor="end">0</text><path d="M675.6 309.88H1017.8" stroke="#e3e3e3" stroke-width=".9"/><text x="666.6" y="312.88" font-size="8.4" fill="#5f5f5f" text-anchor="end">100</text><path d="M675.6 290.17H1017.8" stroke="#e3e3e3" stroke-width=".9"/><text x="666.6" y="293.17" font-size="8.4" fill="#5f5f5f" text-anchor="end">200</text><path d="M675.6 270.45H1017.8" stroke="#e3e3e3" stroke-width=".9"/><text x="666.6" y="273.45" font-size="8.4" fill="#5f5f5f" text-anchor="end">300</text><path d="M675.6 250.73H1017.8" stroke="#e3e3e3" stroke-width=".9"/><text x="666.6" y="253.73" font-size="8.4" fill="#5f5f5f" text-anchor="end">400</text><path d="M675.6 231.02H1017.8" stroke="#e3e3e3" stroke-width=".9"/><text x="666.6" y="234.02" font-size="8.4" fill="#5f5f5f" text-anchor="end">500</text><path d="M675.6 211.30H1017.8" stroke="#e3e3e3" stroke-width=".9"/><text x="666.6" y="214.30" font-size="8.4" fill="#5f5f5f" text-anchor="end">600</text><rect x="679.17" y="320.33" width="3.26" height="9.27" fill="#4472c4"/><rect x="683.31" y="318.16" width="3.26" height="11.44" fill="#ed7d31"/><rect x="687.45" y="314.02" width="3.26" height="15.58" fill="#a5a5a5"/><rect x="691.59" y="301.41" width="3.26" height="28.19" fill="#ffc000"/><rect x="695.74" y="266.31" width="3.26" height="63.29" fill="#5b9bd5"/><rect x="699.88" y="246.59" width="3.26" height="83.01" fill="#70ad47"/><text transform="translate(693.75 341.6) rotate(-45)" font-size="8.9" fill="#5f5f5f" text-anchor="end">Italien</text><rect x="710.28" y="294.90" width="3.26" height="34.70" fill="#4472c4"/><rect x="714.42" y="299.63" width="3.26" height="29.97" fill="#ed7d31"/><rect x="718.56" y="309.69" width="3.26" height="19.91" fill="#a5a5a5"/><rect x="722.70" y="310.28" width="3.26" height="19.32" fill="#ffc000"/><rect x="726.85" y="289.77" width="3.26" height="39.83" fill="#5b9bd5"/><rect x="730.99" y="284.05" width="3.26" height="45.55" fill="#70ad47"/><text transform="translate(724.86 341.6) rotate(-45)" font-size="8.9" fill="#5f5f5f" text-anchor="end">Frankrike</text><rect x="741.39" y="312.45" width="3.26" height="17.15" fill="#4472c4"/><rect x="745.53" y="316.00" width="3.26" height="13.60" fill="#ed7d31"/><rect x="749.67" y="303.57" width="3.26" height="26.03" fill="#a5a5a5"/><rect x="753.81" y="297.26" width="3.26" height="32.34" fill="#ffc000"/><rect x="757.95" y="301.41" width="3.26" height="28.19" fill="#5b9bd5"/><rect x="762.10" y="305.15" width="3.26" height="24.45" fill="#70ad47"/><text transform="translate(755.97 341.6) rotate(-45)" font-size="8.9" fill="#5f5f5f" text-anchor="end">Tyskland</text><rect x="772.50" y="292.14" width="3.26" height="37.46" fill="#4472c4"/><rect x="776.64" y="299.43" width="3.26" height="30.17" fill="#ed7d31"/><rect x="780.78" y="302.98" width="3.26" height="26.62" fill="#a5a5a5"/><rect x="784.92" y="289.58" width="3.26" height="40.02" fill="#ffc000"/><rect x="789.06" y="259.41" width="3.26" height="70.19" fill="#5b9bd5"/><rect x="793.20" y="231.41" width="3.26" height="98.19" fill="#70ad47"/><text transform="translate(787.08 341.6) rotate(-45)" font-size="8.9" fill="#5f5f5f" text-anchor="end">Spanien</text><rect x="803.61" y="312.45" width="3.26" height="17.15" fill="#4472c4"/><rect x="807.75" y="316.19" width="3.26" height="13.41" fill="#ed7d31"/><rect x="811.89" y="312.05" width="3.26" height="17.55" fill="#a5a5a5"/><rect x="816.03" y="289.38" width="3.26" height="40.22" fill="#ffc000"/><rect x="820.17" y="281.10" width="3.26" height="48.50" fill="#5b9bd5"/><rect x="824.31" y="274.59" width="3.26" height="55.01" fill="#70ad47"/><text transform="translate(818.19 341.6) rotate(-45)" font-size="8.9" fill="#5f5f5f" text-anchor="end">Grekland</text><rect x="834.72" y="314.62" width="3.26" height="14.98" fill="#4472c4"/><rect x="838.86" y="318.95" width="3.26" height="10.65" fill="#ed7d31"/><rect x="843.00" y="320.73" width="3.26" height="8.87" fill="#a5a5a5"/><rect x="847.14" y="312.05" width="3.26" height="17.55" fill="#ffc000"/><rect x="851.28" y="314.42" width="3.26" height="15.18" fill="#5b9bd5"/><rect x="855.42" y="308.31" width="3.26" height="21.29" fill="#70ad47"/><text transform="translate(849.30 341.6) rotate(-45)" font-size="8.9" fill="#5f5f5f" text-anchor="end">Slovenien</text><rect x="865.83" y="269.46" width="3.26" height="60.14" fill="#4472c4"/><rect x="869.97" y="258.23" width="3.26" height="71.37" fill="#ed7d31"/><rect x="874.11" y="276.96" width="3.26" height="52.64" fill="#a5a5a5"/><rect x="878.25" y="297.07" width="3.26" height="32.53" fill="#ffc000"/><rect x="882.39" y="294.90" width="3.26" height="34.70" fill="#5b9bd5"/><rect x="886.53" y="312.05" width="3.26" height="17.55" fill="#70ad47"/><text transform="translate(880.41 341.6) rotate(-45)" font-size="8.9" fill="#5f5f5f" text-anchor="end">Norge</text><rect x="896.93" y="312.45" width="3.26" height="17.15" fill="#4472c4"/><rect x="901.08" y="310.87" width="3.26" height="18.73" fill="#ed7d31"/><rect x="905.22" y="317.97" width="3.26" height="11.63" fill="#a5a5a5"/><rect x="909.36" y="314.62" width="3.26" height="14.98" fill="#ffc000"/><rect x="913.50" y="312.45" width="3.26" height="17.15" fill="#5b9bd5"/><rect x="917.64" y="316.39" width="3.26" height="13.21" fill="#70ad47"/><text transform="translate(911.52 341.6) rotate(-45)" font-size="8.9" fill="#5f5f5f" text-anchor="end">Island</text><rect x="928.04" y="322.30" width="3.26" height="7.30" fill="#4472c4"/><rect x="932.18" y="320.73" width="3.26" height="8.87" fill="#ed7d31"/><rect x="936.33" y="314.02" width="3.26" height="15.58" fill="#a5a5a5"/><rect x="940.47" y="309.09" width="3.26" height="20.51" fill="#ffc000"/><rect x="944.61" y="289.97" width="3.26" height="39.63" fill="#5b9bd5"/><rect x="948.75" y="283.86" width="3.26" height="45.74" fill="#70ad47"/><text transform="translate(942.63 341.6) rotate(-45)" font-size="8.9" fill="#5f5f5f" text-anchor="end">Malta</text><rect x="959.15" y="288.98" width="3.26" height="40.62" fill="#4472c4"/><rect x="963.29" y="270.25" width="3.26" height="59.35" fill="#ed7d31"/><rect x="967.44" y="279.52" width="3.26" height="50.08" fill="#a5a5a5"/><rect x="971.58" y="308.50" width="3.26" height="21.10" fill="#ffc000"/><rect x="975.72" y="308.11" width="3.26" height="21.49" fill="#5b9bd5"/><rect x="979.86" y="305.74" width="3.26" height="23.86" fill="#70ad47"/><text transform="translate(973.74 341.6) rotate(-45)" font-size="8.9" fill="#5f5f5f" text-anchor="end">Österrike</text><rect x="990.26" y="309.09" width="3.26" height="20.51" fill="#4472c4"/><rect x="994.40" y="305.35" width="3.26" height="24.25" fill="#ed7d31"/><rect x="998.54" y="305.74" width="3.26" height="23.86" fill="#a5a5a5"/><rect x="1002.69" y="292.34" width="3.26" height="37.26" fill="#ffc000"/><rect x="1006.83" y="289.97" width="3.26" height="39.63" fill="#5b9bd5"/><rect x="1010.97" y="274.79" width="3.26" height="54.81" fill="#70ad47"/><text transform="translate(1004.85 341.6) rotate(-45)" font-size="8.9" fill="#5f5f5f" text-anchor="end">Bulgarien</text><text x="794.2" y="193.3" font-size="13.3" fill="#5a5a5a" letter-spacing=".2">Diagramrubrik</text><rect x="730.3" y="384.1" width="5.4" height="5.4" fill="#4472c4"/><text x="738.3" y="389.7" font-size="8.5" fill="#5f5f5f">Januari</text><rect x="774.4" y="384.1" width="5.4" height="5.4" fill="#ed7d31"/><text x="782.1" y="389.7" font-size="8.5" fill="#5f5f5f">Februari</text><rect x="823.4" y="384.1" width="5.4" height="5.4" fill="#a5a5a5"/><text x="831.3" y="389.7" font-size="8.5" fill="#5f5f5f">Mars</text><rect x="859.0" y="384.1" width="5.4" height="5.4" fill="#ffc000"/><text x="866.9" y="389.7" font-size="8.5" fill="#5f5f5f">April</text><rect x="893.4" y="384.1" width="5.4" height="5.4" fill="#5b9bd5"/><text x="901.9" y="389.7" font-size="8.5" fill="#5f5f5f">Maj</text><rect x="924.8" y="384.1" width="5.4" height="5.4" fill="#70ad47"/><text x="932.6" y="389.7" font-size="8.5" fill="#5f5f5f">Juni</text><circle cx="646.0" cy="172.40" r="3.7" fill="#fff" stroke="#767676" stroke-width="1.1"/><circle cx="838.7" cy="172.40" r="3.7" fill="#fff" stroke="#767676" stroke-width="1.1"/><circle cx="646.0" cy="287.90" r="3.7" fill="#fff" stroke="#767676" stroke-width="1.1"/><circle cx="646.0" cy="403.40" r="3.7" fill="#fff" stroke="#767676" stroke-width="1.1"/><circle cx="838.7" cy="403.40" r="3.7" fill="#fff" stroke="#767676" stroke-width="1.1"/><g transform="translate(739.3 186.2)"><path d="M-4.6 0H4.6M0 -4.6V4.6" stroke="#222" stroke-width=".9"/><path d="M-4.9 0l1.6-1.3v2.6zM4.9 0l-1.6-1.3v2.6zM0 -4.9l-1.3 1.6h2.6zM0 4.9l-1.3-1.6h2.6z" fill="#222"/><path d="M1 1.2v8.2l1.9-1.7 1.4 3 1.2-.6-1.4-2.9h2.5z" fill="#fff" stroke="#222" stroke-width=".8" stroke-linejoin="round"/></g></svg>
</body></html>
